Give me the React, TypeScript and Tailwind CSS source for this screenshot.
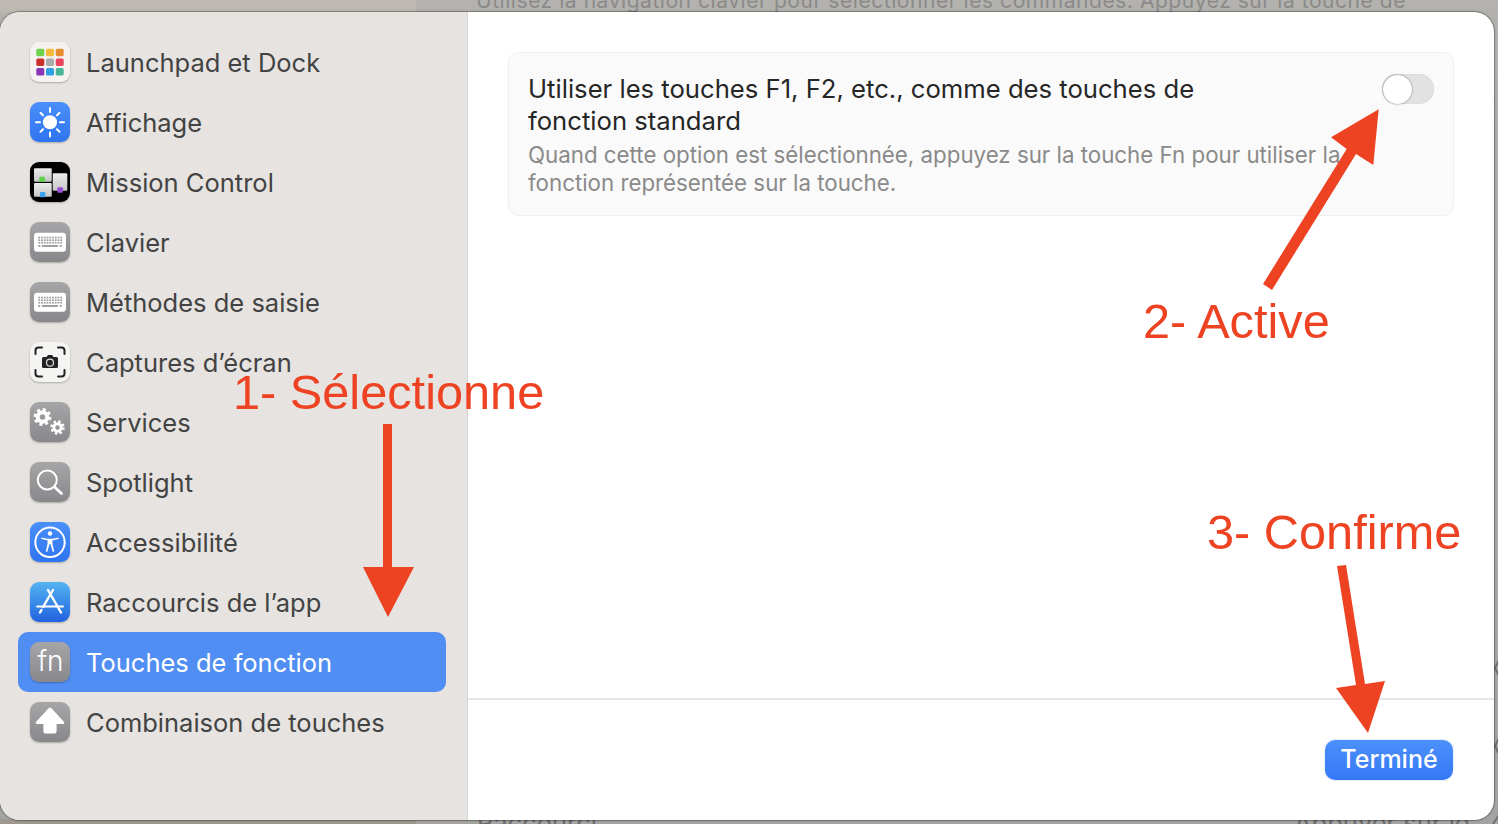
const sans = "font-['Inter','Noto_Sans',sans-serif]";

function Frame({ cls, children }: { cls: string; children?: React.ReactNode }) {
  return <div className={`w-10 h-10 rounded-[9px] shrink-0 overflow-hidden shadow-[0_1px_2px_rgba(0,0,0,0.25)] ${cls}`}>{children}</div>;
}
const gray = "bg-linear-to-b from-[#a6a6a8] to-[#88888c]";

function Launchpad() {
  const colors = ["#6fd24f", "#f2b93b", "#e88c30", "#c9302a", "#a8acad", "#e9445c", "#8a34b8", "#2d9fe3", "#45b596"];
  return (
    <Frame cls="bg-[#f4f3f2]">
      <svg viewBox="0 0 40 40" className="w-10 h-10">
        {colors.map((c, i) => (
          <rect key={i} x={6.3 + (i % 3) * 9.7} y={6.7 + Math.floor(i / 3) * 9.7} width="8" height="7.5" rx="1.6" fill={c} />
        ))}
      </svg>
    </Frame>
  );
}
function Sun() {
  return (
    <Frame cls="bg-linear-to-b from-[#4a8ffa] to-[#2f74f0]">
      <svg viewBox="0 0 40 40" className="w-10 h-10">
        <circle cx="20" cy="20.300" r="7" fill="#fff" />
        <g stroke="#fff" strokeWidth="2" strokeLinecap="round">
          <path d="M20 6v4M20 30.500v4M6 20.300h4M30 20.300h4M10.500 10.800l2.500 2.500M27 27.300l2.500 2.500M10.500 29.800l2.500-2.500M27 13.300l2.500-2.500" />
        </g>
      </svg>
    </Frame>
  );
}
function Mission() {
  return (
    <Frame cls="bg-black">
      <svg viewBox="0 0 40 40" className="w-10 h-10">
        <defs>
          <linearGradient id="mc" x1="0" y1="0" x2="0" y2="1">
            <stop offset="0" stopColor="#ececec" />
            <stop offset="1" stopColor="#c6c6c6" />
          </linearGradient>
        </defs>
        <rect x="4" y="6.300" width="17.700" height="13.400" rx="1" fill="url(#mc)" />
        <rect x="4" y="21" width="17.700" height="13.700" rx="1" fill="url(#mc)" />
        <rect x="22.700" y="11.300" width="14.600" height="17.400" rx="1" fill="url(#mc)" />
        <rect x="9.300" y="14.700" width="5.700" height="5.300" rx="1" fill="#5fd04c" />
        <rect x="10" y="30" width="5.300" height="5.300" rx="1" fill="#3aa4f2" />
        <rect x="27.300" y="25.300" width="5.700" height="5.400" rx="1" fill="#9a4fd0" />
      </svg>
    </Frame>
  );
}
function Keyboard() {
  const dots: React.ReactNode[] = [];
  for (let r = 0; r < 3; r++) for (let c = 0; c < 9; c++) dots.push(<rect key={`${r}-${c}`} x={8.3 + c * 2.75} y={14.700 + r * 2.6} width="1.800" height="1.700" fill="#a0a0a4" />);
  return (
    <Frame cls={gray}>
      <svg viewBox="0 0 40 40" className="w-10 h-10">
        <rect x="4" y="10.700" width="32" height="19" rx="3" fill="#fff" />
        {dots}
        <rect x="8.300" y="23" width="2" height="2" fill="#a0a0a4" />
        <rect x="12" y="23" width="16" height="2" fill="#a0a0a4" />
        <rect x="29.700" y="23" width="2" height="2" fill="#a0a0a4" />
      </svg>
    </Frame>
  );
}
function Screenshot() {
  return (
    <Frame cls="bg-[#f4f4f3]">
      <svg viewBox="0 0 40 40" className="w-10 h-10">
        <g fill="none" stroke="#222" strokeWidth="2" strokeLinecap="round">
          <path d="M5.500 12V8.500a3 3 0 0 1 3-3H12M28 5.500h3.500a3 3 0 0 1 3 3V12M5.500 28v3.500a3 3 0 0 0 3 3H12M28 34.500h3.500a3 3 0 0 0 3-3V28" />
        </g>
        <path d="M13.500 15h3l1.500-2h4l1.500 2h3a1.500 1.500 0 0 1 1.500 1.500v8a1.500 1.500 0 0 1-1.500 1.500h-13a1.500 1.500 0 0 1-1.500-1.500v-8a1.500 1.500 0 0 1 1.500-1.500z" fill="#222" />
        <circle cx="20" cy="20.700" r="3.500" fill="#222" stroke="#ddd" strokeWidth="1.200" />
      </svg>
    </Frame>
  );
}
function Gears() {
  return (
    <Frame cls={gray}>
      <svg viewBox="0 0 40 40" className="w-10 h-10" fill="none" stroke="#fff">
        <circle cx="12.500" cy="15" r="7.400" strokeWidth="3" strokeDasharray="3 2.810" />
        <circle cx="12.500" cy="15" r="4.800" strokeWidth="4" />
        <circle cx="27.500" cy="25.500" r="6" strokeWidth="2.400" strokeDasharray="2.400 2.310" />
        <circle cx="27.500" cy="25.500" r="3.700" strokeWidth="3" />
      </svg>
    </Frame>
  );
}
function Spotlight() {
  return (
    <Frame cls={gray}>
      <svg viewBox="0 0 40 40" className="w-10 h-10" fill="none" stroke="#fff">
        <circle cx="17.300" cy="18" r="9.500" strokeWidth="2" />
        <path d="M24.500 25l7 6.500" strokeWidth="2.800" strokeLinecap="round" />
      </svg>
    </Frame>
  );
}
function Access() {
  return (
    <Frame cls="bg-linear-to-b from-[#4a8ffa] to-[#2f74f0]">
      <svg viewBox="0 0 40 40" className="w-10 h-10">
        <circle cx="20" cy="20.300" r="14.700" fill="none" stroke="#fff" strokeWidth="2" />
        <circle cx="20" cy="11.500" r="2.200" fill="#fff" />
        <path d="M11.500 15.500c3 .9 5.800 1.300 8.500 1.300s5.500-.4 8.500-1.300l.4 1.300c-2.500.9-4.700 1.400-6.600 1.600l.2 3.400 1.700 8h-1.500l-2.200-7.600h-1l-2.200 7.600h-1.500l1.700-8 .2-3.400c-1.900-.2-4.100-.7-6.600-1.600z" fill="#fff" />
      </svg>
    </Frame>
  );
}
function AppStore() {
  return (
    <Frame cls="bg-linear-to-b from-[#56b3f0] to-[#2560e0]">
      <svg viewBox="0 0 40 40" className="w-10 h-10" fill="none" stroke="#fff" strokeLinecap="round">
        <path d="M23 8L13 25M18 8l13 22.500" strokeWidth="2.400" />
        <path d="M7 24.500h26" strokeWidth="1.800" />
        <path d="M11.500 28l-1.500 2.500" strokeWidth="2.400" />
      </svg>
    </Frame>
  );
}
function Fn() {
  return (
    <Frame cls={`${gray} flex items-center justify-center`}>
      <span className="text-white text-[28px] leading-none font-light -mt-[3px] ml-[1px]">fn</span>
    </Frame>
  );
}
function Shortcut() {
  return (
    <Frame cls={gray}>
      <svg viewBox="0 0 40 40" className="w-10 h-10">
        <path d="M20 5.600a2 2 0 0 1 1.400.6l12.500 13.600c.8.900.3 2.200-.8 2.200h-6.500v7.500a2 2 0 0 1-2 2H15.400a2 2 0 0 1-2-2V22h-6.500c-1.100 0-1.600-1.300-.8-2.200L18.600 6.200a2 2 0 0 1 1.400-.6z" fill="#fff" />
      </svg>
    </Frame>
  );
}

const items: [string, React.ComponentType][] = [
  ["Launchpad et Dock", Launchpad],
  ["Affichage", Sun],
  ["Mission Control", Mission],
  ["Clavier", Keyboard],
  ["Méthodes de saisie", Keyboard],
  ["Captures d’écran", Screenshot],
  ["Services", Gears],
  ["Spotlight", Spotlight],
  ["Accessibilité", Access],
  ["Raccourcis de l’app", AppStore],
  ["Touches de fonction", Fn],
  ["Combinaison de touches", Shortcut],
];

const note = "absolute font-['Liberation_Sans',Arial,sans-serif] text-[48.700px] leading-none text-[#ee4323] whitespace-nowrap";

export default function App() {
  return (
    <div className={`relative w-[1498px] h-[824px] overflow-hidden bg-linear-to-b from-[#b3b2af] to-[#a4a4a2] ${sans}`}>
      <div className="absolute top-0 left-0 w-[416px] h-[12px] bg-[#bdb8b1]" />
      <div className="absolute bottom-0 left-0 w-[416px] h-[5px] bg-[#9e9890]" />
      <div className="absolute -top-[12px] left-[476px] text-[21px] leading-[26px] text-[#8b8a88] whitespace-nowrap tracking-[0.550px]">
        Utilisez la navigation clavier pour sélectionner les commandes. Appuyez sur la touche de
      </div>
      <div className="absolute top-[810px] left-[477px] text-[25.500px] leading-[26px] text-[#6d6c6a] whitespace-nowrap">Raccourci</div>
      <div className="absolute top-[810px] left-[1294px] text-[25.500px] leading-[26px] text-[#6d6c6a] whitespace-nowrap">Appuyer sur le</div>
      <svg className="absolute top-0 left-0 w-[1498px] h-[824px]" viewBox="0 0 1498 824" fill="none" stroke="#6f6f6f" strokeWidth="2">
        <path d="M1499 660l-4 8 4 8M1499 738l-4 8 4 8M1499 815l-6 9" />
      </svg>

      <div className="relative pt-[12px] pr-[4px]">
        <div className="flex h-[808px] rounded-[20px] overflow-hidden bg-white shadow-[0_0_0_1px_rgba(0,0,0,0.22),0_0_3px_rgba(0,0,0,0.3)]">
          <aside className="w-[468px] shrink-0 bg-[#e6e3e0] border-r border-[#d5d3d1] pt-[20px] pl-[18px] pr-[21px]">
            {items.map(([label, Icon]) => {
              const active = label === "Touches de fonction";
              return (
                <div key={label} className={`flex items-center h-[60px] pl-[12px] gap-[16px] rounded-[10px] ${active ? "bg-[#518ef3] text-white" : "text-[#434343]"}`}>
                  <Icon />
                  <span className="pt-[2px] text-[25.500px] leading-[32px] whitespace-nowrap">{label}</span>
                </div>
              );
            })}
          </aside>
          <main className="flex-1 flex flex-col">
            <div className="flex-1 p-[40px]">
              <div className="flex justify-between rounded-[10px] border border-[#efefef] bg-[#fafafa] pt-[20px] pb-[18px] pl-[19px] pr-[19px]">
                <div className="w-[830px]">
                  <div className="text-[25.650px] leading-[32px] text-[#262626]">
                    Utiliser les touches F1, F2, etc., comme des touches de<br />fonction standard
                  </div>
                  <div className="mt-[4px] text-[22.300px] leading-[28px] text-[#8a8a8a] whitespace-nowrap">
                    Quand cette option est sélectionnée, appuyez sur la touche Fn pour utiliser la<br />fonction représentée sur la touche.
                  </div>
                </div>
                <div className="relative w-[52px] h-[30px] mt-[1px] rounded-full bg-[#e2e2e2] shadow-[inset_0_0_1px_rgba(0,0,0,0.2)]">
                  <div className="absolute left-[1px] top-[0.500px] w-[29px] h-[29px] rounded-full bg-white shadow-[0_0_2px_rgba(0,0,0,0.55)]" />
                </div>
              </div>
            </div>
            <div className="h-[122px] border-t-2 border-[#e6e6e6] flex justify-end pt-[40px] pr-[41px]">
              <div className="w-[128px] h-[40px] rounded-[10px] bg-linear-to-b from-[#4c90fb] to-[#3478f6] flex items-center justify-center text-white text-[25px] font-medium shadow-[0_0_2px_rgba(52,120,246,0.4)]">
                Terminé
              </div>
            </div>
          </main>
        </div>
      </div>

      <div className={`${note} left-[233px] top-[368px]`}>1- Sélectionne</div>
      <div className={`${note} left-[1143px] top-[297px]`}>2- Active</div>
      <div className={`${note} left-[1207px] top-[508px]`}>3- Confirme</div>

      <svg className="absolute inset-0 w-[1498px] h-[824px] pointer-events-none" viewBox="0 0 1498 824">
        <g fill="#ee4323">
          <path d="M383 424h9v143h22l-26 50-25-50h20z" />
          <path d="M1263 284L1346.700 149L1331 137.300L1378.700 109.300L1373.300 165L1356 154L1272 290Z" />
          <path d="M1337 566L1346 565L1365 684L1385 681L1368 733L1336 688L1356 685Z" />
        </g>
      </svg>
    </div>
  );
}
